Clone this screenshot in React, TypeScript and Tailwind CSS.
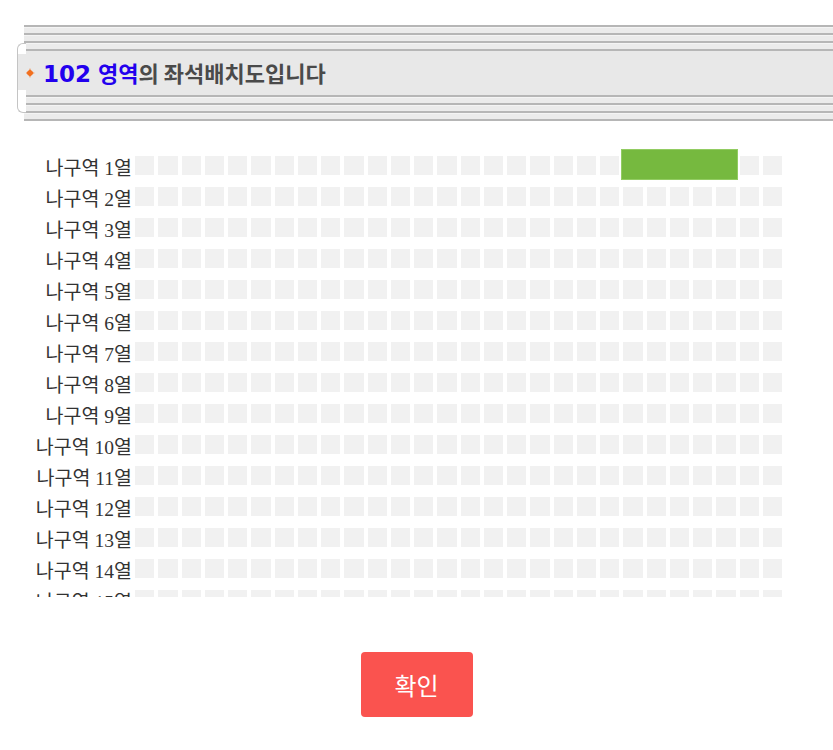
import React from "react";

const ROWS = 16;
const COLS = 28;

function Stripes() {
  return (
    <div className="flex flex-col">
      {[0, 1, 2].map((i) => (
        <React.Fragment key={i}>
          <div className="h-[2px] bg-[#b6b6b6]" />
          <div className="h-[6px] bg-[#ebebeb] border-t border-[#f4f4f4]" />
        </React.Fragment>
      ))}
      <div className="h-[2px] bg-[#b6b6b6]" />
    </div>
  );
}

function Spark() {
  return (
    <svg width="10" height="10" viewBox="0 0 10 10" className="shrink-0">
      <path
        d="M5 0 C5.5 2.8 7.2 4.5 10 5 C7.2 5.5 5.5 7.2 5 10 C4.5 7.2 2.8 5.5 0 5 C2.8 4.5 4.5 2.8 5 0 Z"
        fill="#f2701f"
      />
      <circle cx="5" cy="5" r="2.8" fill="#f2701f" />
    </svg>
  );
}

function Header() {
  return (
    <div className="relative ml-[17px] mt-[25px]">
      {/* rounded left bracket */}
      <div className="absolute left-0 top-[18px] h-[70px] w-[9px] rounded-l-[6px] border-y border-l border-[#c4c4c4] bg-white" />
      <div className="absolute left-[1px] top-[29px] h-[36px] w-[8px] bg-[#e8e8e8]" />
      <div className="ml-[7px]">
        <Stripes />
        <div className="flex h-[44px] items-center bg-[#e8e8e8] pl-[1px]">
          <Spark />
          <div className="ml-[8px] flex items-baseline whitespace-nowrap font-bold leading-none">
            <span
              className="text-[#2200ee] text-[23px]"
              style={{ fontFamily: '"DejaVu Sans", sans-serif' }}
            >
              102
            </span>
            <span
              className="text-[#2200ee] ml-[7px] text-[22px]"
              style={{ fontFamily: '"Noto Sans CJK KR", sans-serif' }}
            >
              영역
            </span>
            <span
              className="text-[#4a4a4a] text-[22px]"
              style={{ fontFamily: '"Noto Sans CJK KR", sans-serif' }}
            >
              의 좌석배치도입니다
            </span>
          </div>
        </div>
        <Stripes />
      </div>
    </div>
  );
}

function SeatGrid() {
  return (
    <div className="relative mt-[26px] h-[450px] overflow-hidden pt-[6px]">
      {Array.from({ length: ROWS }).map((_, r) => (
        <div key={r} className="flex h-[31px] items-start">
          <div
            className="w-[132px] shrink-0 text-right text-[19.5px] leading-[31px] text-[#333333] whitespace-nowrap"
            style={{ fontFamily: '"Liberation Serif", "Noto Sans CJK KR", serif' }}
          >
            나구역 {r + 1}열
          </div>
          <div className="ml-[3px] mt-[3px] grid w-[647px] grid-cols-[repeat(28,minmax(0,1fr))] gap-x-[4px]">
            {Array.from({ length: COLS }).map((__, c) => (
              <div key={c} className="h-[19px] bg-[#f1f1f1]" />
            ))}
          </div>
        </div>
      ))}
      {/* selected block */}
      <div className="absolute left-[621px] top-[2px] h-[31px] w-[117px] border border-[#92cc62] bg-[#76b93f]" />
    </div>
  );
}

export default function App() {
  return (
    <div className="h-[750px] w-[833px] overflow-hidden bg-white">
      <Header />
      <SeatGrid />
      <div className="mt-[55px] flex justify-center">
        <button
          className="h-[65px] w-[112px] rounded-[4px] bg-[#fa534f] text-[24px] text-white"
          style={{ fontFamily: '"Noto Sans CJK KR", sans-serif' }}
        >
          확인
        </button>
      </div>
    </div>
  );
}
